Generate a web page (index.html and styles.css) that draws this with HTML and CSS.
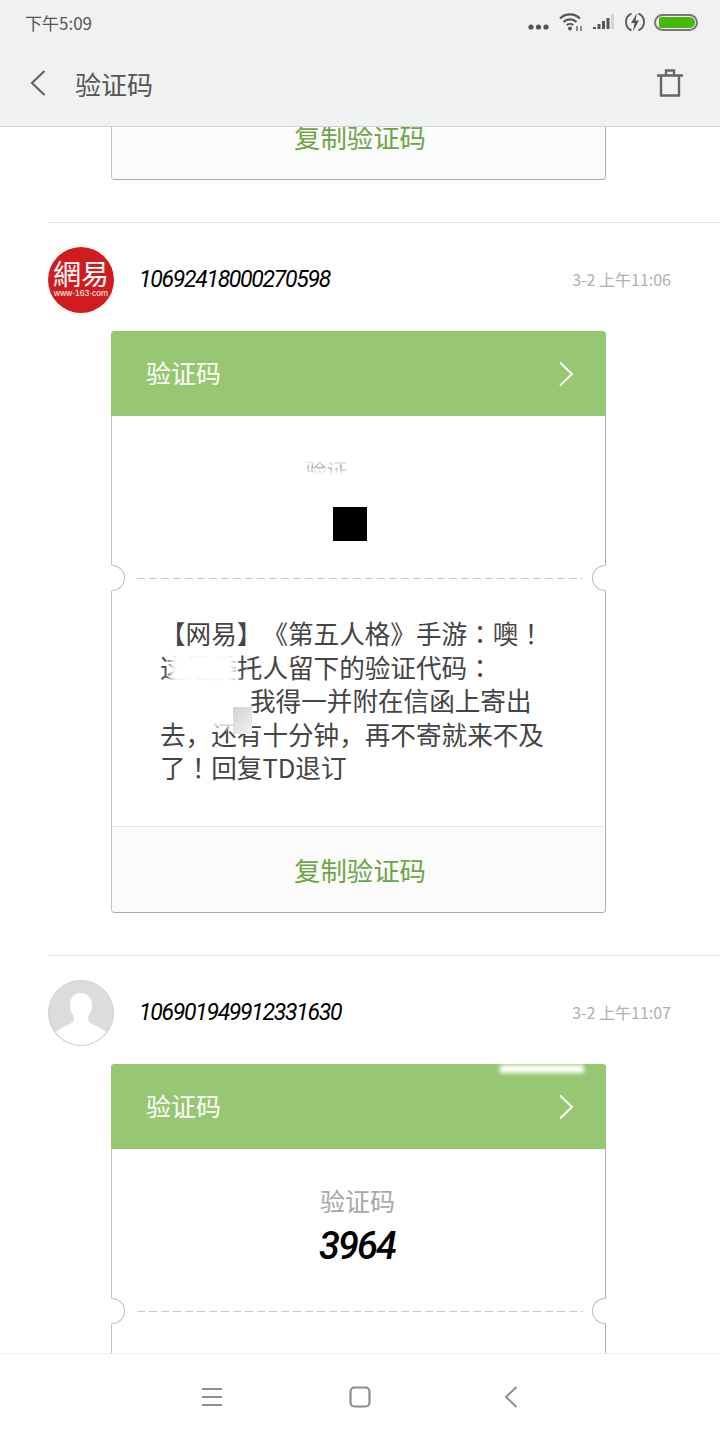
FILE: index.html
```html
<!DOCTYPE html>
<html lang="zh-CN">
<head>
    <meta charset="UTF-8">
    <meta name="viewport" content="width=device-width, initial-scale=1.0">
    <title>验证码</title>
    <link rel="stylesheet" href="styles.css">
</head>
<body>
<div class="app">
    <header class="top">
        <div class="status">
            <span class="clock">下午5:09</span>
            <div class="status-icons">
                <svg class="ic-dots" width="21" height="6" viewBox="0 0 21 6"><circle cx="3" cy="3" r="2.6"/><circle cx="10.5" cy="3" r="2.6"/><circle cx="18" cy="3" r="2.6"/></svg>
                <svg class="ic-wifi" width="25" height="20" viewBox="0 0 25 20" fill="none" stroke="#555"><path d="M1 6.5C6.5 1 15.5 1 21 6.5" stroke-width="2.2"/><path d="M4.5 10C8 6.6 14 6.6 17.5 10" stroke-width="2.2"/><path d="M7.8 13.2C9.6 11.6 12.4 11.6 14.2 13.2" stroke-width="2"/><circle cx="11" cy="16.5" r="2" fill="#555" stroke="none"/><path d="M18 14v5M22 14v5" stroke-width="1.3"/></svg>
                <svg class="ic-signal" width="22" height="16" viewBox="0 0 22 16"><rect x="0" y="13" width="3" height="2" fill="#555"/><rect x="4.5" y="10" width="3" height="5" fill="#555"/><rect x="9" y="7" width="3" height="8" fill="#555"/><rect x="13.5" y="4" width="3" height="11" fill="#555"/><rect x="18" y="0" width="3" height="15" fill="#d4d6d6"/></svg>
                <svg class="ic-charge" width="20" height="20" viewBox="0 0 20 20" fill="none"><path d="M6.5 1.7a9 9 0 0 0 0 16.6M13.5 1.7a9 9 0 0 1 0 16.6" stroke="#555" stroke-width="1.8"/><path d="M12 1 6 11h3.5L8 19.5l6-11h-3.5z" fill="#555"/></svg>
                <div class="battery"><div class="battery-fill"></div></div>
            </div>
        </div>
        <div class="titlebar">
            <svg class="back" width="16" height="26" viewBox="0 0 16 26" fill="none"><path d="M14.5 1 2 13l12.5 12" stroke="#666" stroke-width="2.2"/></svg>
            <h1 class="title">验证码</h1>
            <svg class="trash" width="26" height="28" viewBox="0 0 26 28" fill="none" stroke="#666" stroke-width="2.4"><path d="M0 6.5h26M4 6.5V26.5h18V6.5M9 6.5V1.5h8v5"/></svg>
        </div>
    </header>

    <main class="feed">
        <!-- карточка, уехавшая за верхний край -->
        <div class="card card-stub">
            <div class="card-foot">复制验证码</div>
        </div>

        <section class="item">
            <div class="sender">
                <div class="avatar avatar-163">
                    <span class="logo-name">網易</span>
                    <span class="logo-url">www·163·com</span>
                </div>
                <span class="number">10692418000270598</span>
                <span class="time">3-2 上午11:06</span>
            </div>
            <div class="card">
                <div class="card-head">
                    <span class="head-title">验证码</span>
                    <svg width="16" height="26" viewBox="0 0 16 26" fill="none"><path d="M2 1.5 14 13 2 24.5" stroke="#fff" stroke-width="2"/></svg>
                </div>
                <div class="card-body">
                    <span class="code-label code-label-cut">验证</span>
                    <div class="code-hidden"></div>
                </div>
                <div class="card-msg">
                    <i class="notch notch-l"></i><i class="notch notch-r"></i>
                    <div class="dash"></div>
                    <p class="msg-text">
                        <span class="line">【网易】《第五人格》手游<span class="mark" lang="zh-TW">：</span>噢<span class="mark" lang="zh-TW">！</span></span>
                        <span class="line">这是委托人留下的验证代码<span class="mark" lang="zh-TW">：</span></span>
                        <span class="line line-indent">我得一并附在信函上寄出</span>
                        <span class="line">去，还有十分钟，再不寄就来不及</span>
                        <span class="line">了<span class="mark" lang="zh-TW">！</span>回复TD退订</span>
                    </p>
                    <div class="smudge smudge-a"></div>
                    <div class="smudge smudge-b"></div>
                    <div class="smudge smudge-c"></div>
                    <div class="smudge-grey"></div>
                </div>
                <div class="card-foot">复制验证码</div>
            </div>
        </section>

        <section class="item">
            <div class="sender">
                <div class="avatar avatar-none">
                    <svg width="66" height="66" viewBox="0 0 66 66"><circle cx="33" cy="33" r="32.5" fill="#dcdcdc" stroke="#d0d0d0"/><path d="M33 13c-7 0-11 5-11 12 0 4 1 7 3 10 1 2 1 5 0 7-4 3-11 5-17 10 6 8 15 13 25 13s19-5 25-13c-6-5-13-7-17-10-1-2-1-5 0-7 2-3 3-6 3-10 0-7-4-12-11-12z" fill="#fff"/></svg>
                </div>
                <span class="number">106901949912331630</span>
                <span class="time">3-2 上午11:07</span>
            </div>
            <div class="card">
                <div class="smudge-top"></div>
                <div class="card-head">
                    <span class="head-title">验证码</span>
                    <svg width="16" height="26" viewBox="0 0 16 26" fill="none"><path d="M2 1.5 14 13 2 24.5" stroke="#fff" stroke-width="2"/></svg>
                </div>
                <div class="card-body">
                    <span class="code-label">验证码</span>
                    <span class="code">3964</span>
                </div>
                <div class="card-msg">
                    <i class="notch notch-l"></i><i class="notch notch-r"></i>
                    <div class="dash"></div>
                </div>
            </div>
        </section>
    </main>

    <nav class="bottom">
        <svg width="22" height="20" viewBox="0 0 22 20" fill="none" stroke="#8e8e8e" stroke-width="2"><path d="M1 2h20M1 10h20M1 18h20"/></svg>
        <svg width="22" height="22" viewBox="0 0 22 22" fill="none" stroke="#8e8e8e" stroke-width="2.2"><rect x="1.5" y="1.5" width="19" height="19" rx="4"/></svg>
        <svg width="22" height="22" viewBox="0 0 22 22" fill="none" stroke="#8e8e8e" stroke-width="2"><path d="M19.5 1 9 11l10.5 10"/></svg>
    </nav>
</div>
</body>
</html>
```

FILE: styles.css
```css
* {
    box-sizing: border-box;
}
body {
    margin: 0;
    font-family: "Noto Sans CJK SC", "Noto Sans", sans-serif;
    background: #fff;
    text-spacing-trim: space-all;
}
.app {
    width: 720px;
    height: 1440px;
    display: flex;
    flex-direction: column;
    overflow: hidden;
}

/* шапка */
.top {
    height: 127px;
    flex: none;
    background: #f0f2f2;
    border-bottom: 1px solid #d2d4d4;
    position: relative;
    z-index: 2;
}
.status {
    height: 44px;
    padding: 0 22px 0 25px;
    display: flex;
    align-items: center;
    justify-content: space-between;
}
.clock {
    font-size: 17px;
    color: #555;
}
.status-icons {
    display: flex;
    align-items: center;
    gap: 10px;
}
.ic-dots {
    fill: #555;
    margin-top: 10px;
}
.ic-signal {
    margin-left: -1px;
}
.battery {
    width: 44px;
    height: 17px;
    border: 2px solid #777;
    border-radius: 9px;
    padding: 1px;
    margin-left: -1px;
}
.battery-fill {
    height: 100%;
    margin-left: 2px;
    background: #46b80a;
    border-radius: 2px 6px 6px 2px;
}
.titlebar {
    height: 82px;
    padding: 0 37px 4px 30px;
    display: flex;
    align-items: center;
}
.title {
    margin: 0 0 0 29px;
    flex: 1;
    font-size: 26px;
    font-weight: 400;
    color: #555;
}

/* лента */
.feed {
    flex: 1;
    min-height: 0;
    overflow: hidden;
}
.item {
    margin-left: 48px;
    padding: 24px 0 42px;
    border-top: 1px solid #e4e4e4;
}
.sender {
    display: flex;
    align-items: center;
    padding-right: 49px;
    margin-bottom: 18px;
}
.avatar {
    width: 66px;
    height: 66px;
    flex: none;
}
.avatar-163 {
    background: #d01c1f;
    border-radius: 50%;
    color: #fff;
    display: flex;
    flex-direction: column;
    align-items: center;
    font-family: "Noto Sans CJK TC", sans-serif;
}
.logo-name {
    display: block;
    height: 28px;
    margin-top: 12px;
    font-size: 28px;
    line-height: 28px;
    white-space: nowrap;
}
.logo-url {
    display: block;
    margin-top: 1px;
    font-family: "Liberation Sans", sans-serif;
    font-size: 8.5px;
    line-height: 10px;
    white-space: nowrap;
}
.number {
    margin: -2px 0 0 25px;
    font-family: Roboto, sans-serif;
    font-style: italic;
    font-size: 23px;
    letter-spacing: -1.3px;
    color: #000;
}
.time {
    margin: -2px 0 0 auto;
    font-size: 16px;
    color: #b0b0b0;
    white-space: nowrap;
}

/* карточка с кодом */
.card {
    position: relative;
    width: 495px;
    margin-left: 63px;
    border: 1px solid #c4c4c4;
    border-right-color: #b0b0b0;
    border-bottom-color: #a8a8a8;
    border-radius: 4px;
    background: #fff;
}
.card-stub {
    margin: -35px 0 42px 111px;
}
.card-head {
    height: 85px;
    margin: -1px -1px 0;
    padding: 0 32px 0 35px;
    display: flex;
    align-items: center;
    justify-content: space-between;
    background: #97c772;
    border-radius: 4px 4px 0 0;
    color: #fff;
    font-size: 25px;
}
.head-title {
    margin-top: -3px;
}
.card-body {
    height: 162px;
    padding-top: 36px;
    display: flex;
    flex-direction: column;
    align-items: center;
}
.code-label {
    margin-left: -2px;
    font-size: 25px;
    line-height: 30px;
    color: #a8a8a8;
}
.code-label-cut {
    width: 44px;
    height: 21px;
    margin: 2px 0 0 -62px;
    font-size: 21px;
    line-height: 30px;
    white-space: nowrap;
    -webkit-mask-image: linear-gradient(to bottom, transparent 30%, #000 60%, transparent 100%);
    mask-image: linear-gradient(to bottom, transparent 30%, #000 60%, transparent 100%);
}
.code-hidden {
    width: 34px;
    height: 34px;
    margin-top: 32px;
    margin-left: -18px;
    background: #000;
}
.code {
    margin-left: -3px;
    margin-top: 6px;
    font-family: Roboto, sans-serif;
    font-style: italic;
    font-size: 38px;
    font-weight: 500;
    line-height: 50px;
    letter-spacing: -2px;
    color: #000;
}
.card-msg {
    position: relative;
    height: 248px;
}
.dash {
    position: absolute;
    top: 0;
    left: 25px;
    right: 22px;
    height: 1px;
    background: repeating-linear-gradient(to right, #c8c8c8 0 8px, transparent 8px 12px);
}
.notch {
    position: absolute;
    top: -13px;
    width: 14px;
    height: 26px;
    background: #fff;
    border: 1px solid #bdbdbd;
}
.notch-l {
    left: -1px;
    border-left-color: #fff;
    border-radius: 0 13px 13px 0;
}
.notch-r {
    right: -1px;
    border-right-color: #fff;
    border-radius: 13px 0 0 13px;
}
.msg-text {
    margin: 0;
    padding: 38px 0 0 48px;
    font-size: 25.6px;
    line-height: 33.6px;
    color: #444;
    white-space: nowrap;
}
.line {
    display: block;
}
.line-indent {
    padding-left: 90px;
}
/* у TC-шрифта эти знаки стоят по центру клетки */
.mark {
    font-family: "Noto Sans CJK TC", sans-serif;
}

/* замазанные места на снимке */
.smudge {
    position: absolute;
    background: #fff;
    filter: blur(3px);
}
.smudge-a {
    left: 58px;
    top: 74px;
    width: 66px;
    height: 32px;
}
.smudge-b {
    left: 42px;
    top: 104px;
    width: 94px;
    height: 36px;
}
.smudge-c {
    left: 98px;
    top: 130px;
    width: 38px;
    height: 20px;
}
.smudge-grey {
    position: absolute;
    left: 121px;
    top: 129px;
    width: 19px;
    height: 27px;
    background: linear-gradient(135deg, #cfcfcf, #f4f4f4);
}
.smudge-top {
    position: absolute;
    top: 0;
    left: 388px;
    width: 84px;
    height: 8px;
    background: #fff;
    filter: blur(2px);
    z-index: 1;
}
.card-foot {
    height: 86px;
    padding-left: 3px;
    display: flex;
    align-items: center;
    justify-content: center;
    background: #fbfbfb;
    border-top: 1px solid #e6e6e6;
    border-radius: 0 0 4px 4px;
    color: #6ea548;
    font-size: 26.4px;
}

/* нижняя панель */
.bottom {
    height: 87px;
    flex: none;
    position: relative;
    z-index: 2;
    background: #fff;
    border-top: 1px solid #ececec;
    display: grid;
    grid-template-columns: repeat(3, 148px);
    justify-content: center;
    justify-items: center;
    align-items: center;
}
```
